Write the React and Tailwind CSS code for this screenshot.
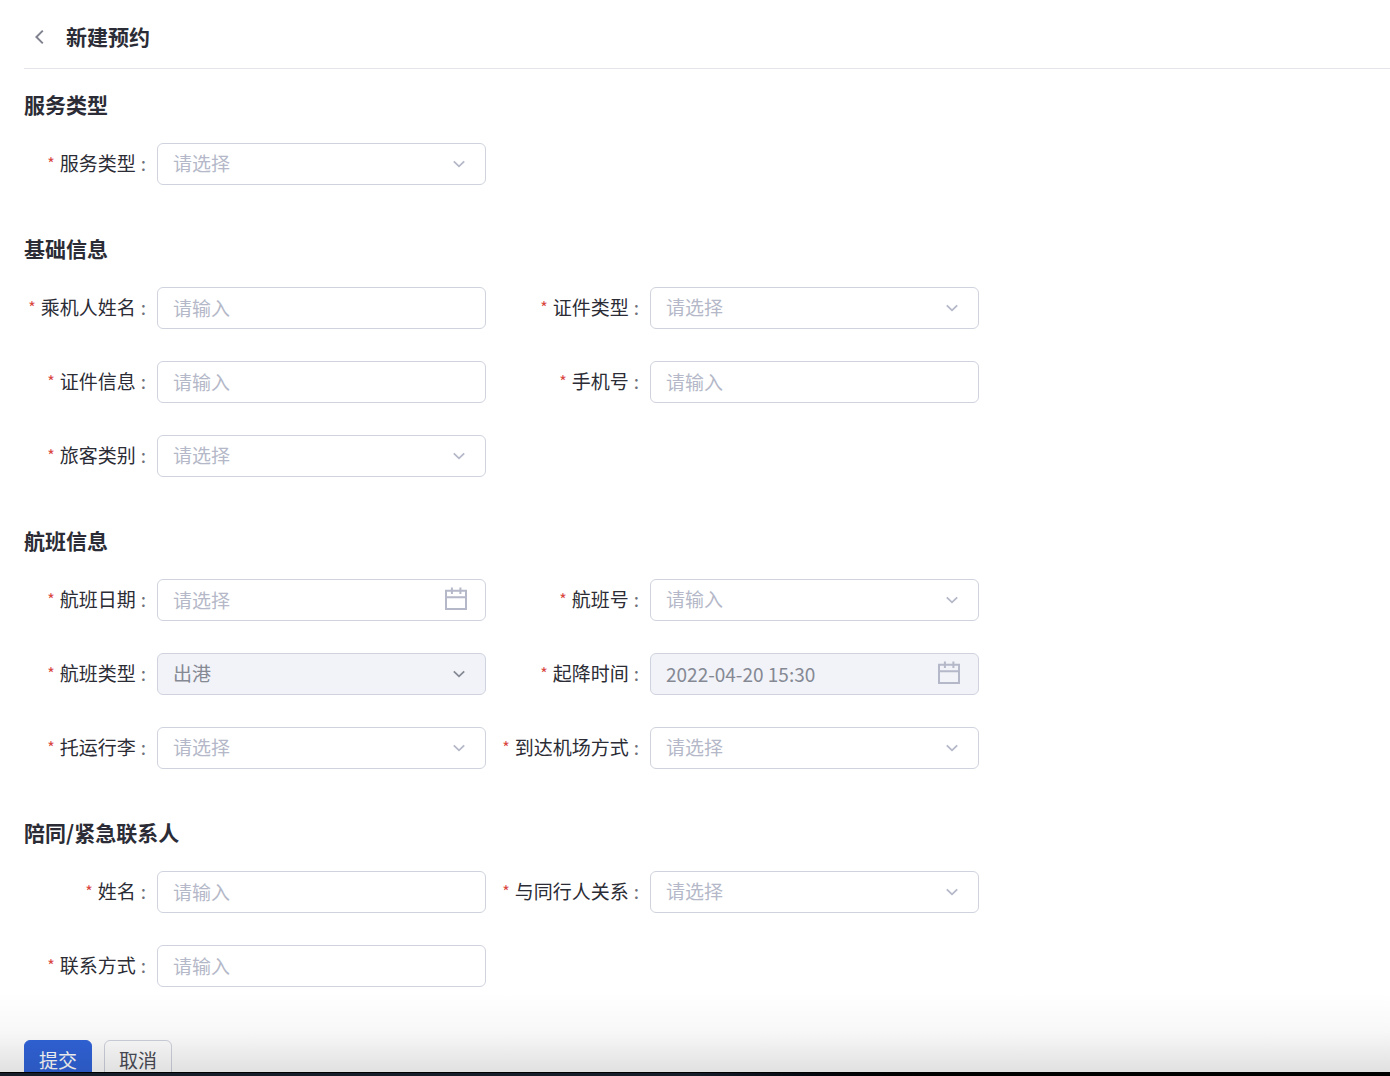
import { useState } from "react";

const sections = [
  {
    title: "服务类型",
    fields: [
      { id: "serviceType", label: "服务类型", type: "select", options: ["轮椅服务", "担架服务"] },
    ],
  },
  {
    title: "基础信息",
    fields: [
      { id: "passengerName", label: "乘机人姓名", type: "text" },
      { id: "idType", label: "证件类型", type: "select", options: ["身份证", "护照"] },
      { id: "idNumber", label: "证件信息", type: "text" },
      { id: "phone", label: "手机号", type: "text" },
      { id: "category", label: "旅客类别", type: "select", options: ["成人", "儿童"] },
    ],
  },
  {
    title: "航班信息",
    fields: [
      { id: "flightDate", label: "航班日期", type: "date" },
      { id: "flightNo", label: "航班号", type: "select", placeholder: "请输入", options: [] },
      { id: "flightType", label: "航班类型", type: "select", options: ["出港", "进港"], disabled: true },
      { id: "flightTime", label: "起降时间", type: "date", disabled: true },
      { id: "luggage", label: "托运行李", type: "select", options: ["有", "无"] },
      { id: "arrival", label: "到达机场方式", type: "select", options: ["自驾", "地铁"] },
    ],
  },
  {
    title: "陪同/紧急联系人",
    fields: [
      { id: "contactName", label: "姓名", type: "text" },
      { id: "relation", label: "与同行人关系", type: "select", options: ["家人", "朋友"] },
      { id: "contactPhone", label: "联系方式", type: "text" },
    ],
  },
];

const controlClass =
  "block h-[42px] w-full appearance-none rounded-md border border-[#d0d3de] bg-white px-[15px] pb-0.5 outline-none placeholder:text-[#b4b8c8] focus:border-[#2d5fd0] disabled:bg-[#f2f3f8] disabled:text-[#858994] disabled:opacity-100";

function ChevronIcon({ className }) {
  return (
    <svg
      viewBox="0 0 12 8"
      className={`pointer-events-none absolute top-[17px] right-[21px] h-2 w-3 ${className}`}
      fill="none"
      stroke="currentColor"
      strokeWidth="1.8"
    >
      <path d="M0.8 1.4 6 6.3 11.2 1.4" />
    </svg>
  );
}

function CalendarIcon() {
  return (
    <svg
      viewBox="0 0 24 24"
      className="pointer-events-none absolute top-2 right-[18px] h-6 w-6 text-[#b4b8c8]"
      fill="none"
      stroke="currentColor"
      strokeWidth="2"
    >
      <path d="M2 3.8h20v18.2H2zM2 10.3h20M7.9 0.5v6.4M16.4 0.5v6.4" />
    </svg>
  );
}

function Field({ field, value, onChange }) {
  const { id, label, type, options, disabled } = field;

  return (
    <>
      <label
        htmlFor={id}
        className="flex h-[42px] items-center justify-end pr-[11px] pb-0.5 whitespace-nowrap text-[#2b2c35]"
      >
        <span className="mr-[5px] text-[16px] text-[#d9473f]">*</span>
        {label}
        <span className="ml-[5px] text-[#6d7079]">:</span>
      </label>
      <div className="relative">
        {type === "select" ? (
          <>
            <select
              id={id}
              value={value}
              disabled={disabled}
              onChange={(e) => onChange(id, e.target.value)}
              className={`${controlClass} ${value ? "text-[#2b2c35]" : "text-[#b4b8c8]"}`}
            >
              <option value="">{field.placeholder || "请选择"}</option>
              {options.map((option) => (
                <option key={option}>{option}</option>
              ))}
            </select>
            <ChevronIcon className={disabled ? "text-[#858994]" : "text-[#b4b8c8]"} />
          </>
        ) : (
          <>
            <input
              id={id}
              type="text"
              value={value}
              disabled={disabled}
              placeholder={type === "date" ? "请选择" : "请输入"}
              onChange={(e) => onChange(id, e.target.value)}
              className={`${controlClass} text-[#2b2c35]`}
            />
            {type === "date" && <CalendarIcon />}
          </>
        )}
      </div>
    </>
  );
}

function App() {
  const [form, setForm] = useState({
    flightType: "出港",
    flightTime: "2022-04-20 15:30",
  });

  const handleChange = (id, value) => setForm({ ...form, [id]: value });

  return (
    <div className="flex h-screen flex-col bg-white font-['Noto_Sans_CJK_SC',sans-serif] text-[19px] text-[#2b2c35]">
      <div className="relative min-h-0 flex-1">
        <div className="h-full overflow-y-auto pl-6 [scrollbar-width:none]">
          <header className="flex h-[69px] items-center border-b border-[#e4e5ea] pt-1.5">
            <button type="button" aria-label="返回" className="flex h-8 w-8 items-center justify-center text-[#80838f]">
              <svg viewBox="0 0 10 16" className="h-4 w-2.5" fill="none" stroke="currentColor" strokeWidth="2">
                <path d="M7.8 1.6 1.4 8l6.4 6.4" />
              </svg>
            </button>
            <h1 className="ml-2.5 text-[21px] font-bold">新建预约</h1>
          </header>
          <form className="pt-[21px]" onSubmit={(e) => e.preventDefault()}>
            <div className="flex flex-col gap-[49px]">
              {sections.map((section) => (
                <section key={section.title}>
                  <h2 className="mb-[25px] text-[21px] leading-7 font-bold">{section.title}</h2>
                  <div className="grid max-w-[955px] grid-cols-[133px_1fr_164px_1fr] gap-y-8">
                    {section.fields.map((field) => (
                      <Field
                        key={field.id}
                        field={field}
                        value={form[field.id] || ""}
                        onChange={handleChange}
                      />
                    ))}
                  </div>
                </section>
              ))}
            </div>
            <div className="mt-[53px] flex gap-3 pb-6">
              <button type="submit" className="h-[42px] rounded-md border border-[#3164da] bg-[#3164da] px-3.5 pb-0.5 text-white">
                提交
              </button>
              <button type="button" className="h-[42px] rounded-md border border-[#d0d3de] bg-white px-3.5 pb-0.5 text-[#4b4d57]">
                取消
              </button>
            </div>
          </form>
        </div>
        <div className="pointer-events-none absolute inset-x-0 bottom-0 h-20 bg-linear-to-b from-transparent via-black/3 to-black/12" />
      </div>
      <div className="h-1 border-t border-black bg-linear-to-r from-[#161d2b] from-50% to-black to-70%" />
    </div>
  );
}

export default App;
